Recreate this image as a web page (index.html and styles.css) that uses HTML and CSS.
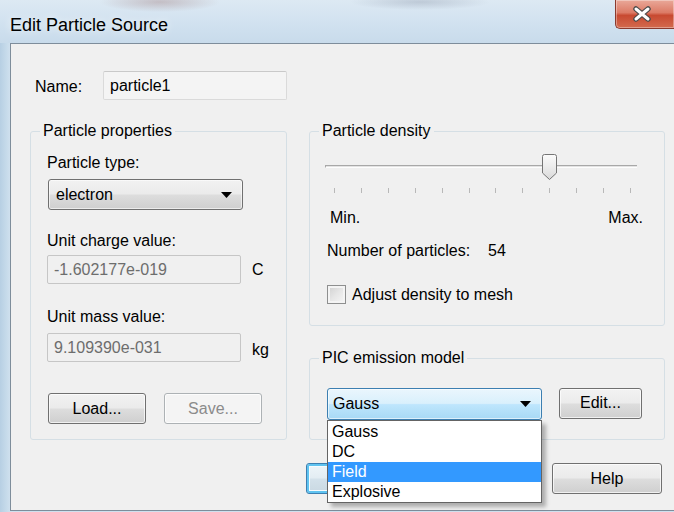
FILE: index.html
```html
<!DOCTYPE html>
<html lang="en">
<head>
<meta charset="utf-8">
<title>Edit Particle Source</title>
<link rel="stylesheet" href="styles.css">
</head>
<body>
<div class="window">
  <div class="titlebar">
    <span class="title">Edit Particle Source</span>
    <div class="close">
      <svg width="20" height="16" viewBox="0 0 20 16">
        <path d="M4 3 L16 13 M16 3 L4 13" stroke="#4b4b4b" stroke-width="5.5" stroke-linecap="round"/>
        <path d="M4 3 L16 13 M16 3 L4 13" stroke="#ffffff" stroke-width="3" stroke-linecap="round"/>
      </svg>
    </div>
  </div>

  <div class="client">
    <div class="name-row">
      <span class="name-label">Name:</span>
      <div class="field name-field">particle1</div>
    </div>

    <div class="columns">
      <fieldset class="group props">
        <legend>Particle properties</legend>
        <div class="props-body">
          <div class="lbl">Particle type:</div>
          <div class="select">
            <span>electron</span>
            <svg class="arrow" width="11" height="6" viewBox="0 0 11 6"><path d="M0 0 H11 L5.5 6 Z" fill="#000"/></svg>
          </div>

          <div class="lbl charge-lbl">Unit charge value:</div>
          <div class="unit-row charge-row">
            <div class="field disabled">-1.602177e-019</div>
            <span class="unit">C</span>
          </div>

          <div class="lbl mass-lbl">Unit mass value:</div>
          <div class="unit-row mass-row">
            <div class="field disabled">9.109390e-031</div>
            <span class="unit">kg</span>
          </div>

          <div class="btn-row">
            <button class="btn">Load...</button>
            <button class="btn" disabled>Save...</button>
          </div>
        </div>
      </fieldset>

      <div class="right-col">
        <fieldset class="group density">
          <legend>Particle density</legend>
          <div class="density-body">
            <div class="slider">
              <div class="track"></div>
              <svg class="thumb" width="17" height="28" viewBox="0 0 17 28">
                <defs>
                  <linearGradient id="thumbFill" x1="0" y1="0" x2="0" y2="1">
                    <stop offset="0" stop-color="#fbfbfb"/>
                    <stop offset="0.5" stop-color="#ececec"/>
                    <stop offset="1" stop-color="#d8d8d8"/>
                  </linearGradient>
                </defs>
                <path d="M1.5 3.5 Q1.5 1.5 3.5 1.5 H13.5 Q15.5 1.5 15.5 3.5 V20 L8.5 26.5 L1.5 20 Z" fill="url(#thumbFill)" stroke="#757575" stroke-width="1"/>
              </svg>
            </div>
            <div class="ticks">
              <i></i><i></i><i></i><i></i><i></i><i></i><i></i><i></i><i></i><i></i><i></i><i></i>
            </div>
            <div class="minmax"><span>Min.</span><span>Max.</span></div>
            <div class="count"><span class="count-label">Number of particles:</span><span>54</span></div>
            <div class="check-row">
              <span class="checkbox"></span>
              <span>Adjust density to mesh</span>
            </div>
          </div>
        </fieldset>

        <fieldset class="group pic">
          <legend>PIC emission model</legend>
          <div class="pic-body">
            <div class="combo-wrap">
              <div class="combo">
                <span>Gauss</span>
                <svg class="arrow" width="11" height="6" viewBox="0 0 11 6"><path d="M0 0 H11 L5.5 6 Z" fill="#000"/></svg>
              </div>
              <ul class="dropdown">
                <li>Gauss</li>
                <li>DC</li>
                <li class="selected">Field</li>
                <li>Explosive</li>
              </ul>
            </div>
            <button class="btn edit-btn">Edit...</button>
          </div>
        </fieldset>
      </div>
    </div>

    <!-- OK and Cancel sit beneath the open drop-down list -->
    <div class="footer">
      <button class="btn wide default" aria-label="OK"></button>
      <button class="btn wide" aria-label="Cancel"></button>
      <button class="btn wide">Help</button>
    </div>
  </div>
</div>
</body>
</html>
```

FILE: styles.css
```css
* {
  box-sizing: border-box;
}

html, body {
  margin: 0;
  padding: 0;
}

body {
  width: 674px;
  height: 512px;
  overflow: hidden;
  font-family: "Liberation Sans", Arial, sans-serif;
  font-size: 16px;
  color: #000;
  background: #c9dcec;
}

.window {
  width: 674px;
  height: 512px;
  display: flex;
  flex-direction: column;
  background: linear-gradient(90deg, #b7cfe3 0, #c5daea 6px, #cfe0ee 10px);
}

/* ---------- title bar ---------- */
.titlebar {
  height: 43px;
  flex: none;
  display: flex;
  justify-content: space-between;
  align-items: flex-start;
  background:
    radial-gradient(ellipse 60px 10px at 160px 2px, rgba(150, 110, 110, 0.35), transparent),
    radial-gradient(ellipse 70px 8px at 420px 2px, rgba(120, 130, 150, 0.3), transparent),
    linear-gradient(180deg, #dde9f3 0, #d2e2f0 50%, #c8dbeb 100%);
}

.title {
  padding: 15px 0 0 10px;
  font-size: 18px;
  line-height: 20px;
  color: #000;
  text-shadow: 0 0 8px rgba(255, 255, 255, 0.9);
}

.close {
  width: 59px;
  height: 29px;
  margin-left: auto;
  display: flex;
  align-items: center;
  justify-content: center;
  padding-right: 7px;
  border: 1px solid #8a3a2e;
  border-top: none;
  border-right: none;
  border-radius: 0 0 0 5px;
  background: linear-gradient(180deg, #e9a899 0, #dc7b66 45%, #c84a31 55%, #d36a4e 100%);
  box-shadow: inset 0 0 0 1px rgba(255, 255, 255, 0.35);
}

/* ---------- client area ---------- */
.client {
  height: 468px;
  margin-left: 10px;
  padding: 27px 9px 0 19px;
  background: #f0f0f0;
  border: 1px solid #7e8d9b;
  border-right: none;
}

.name-row {
  display: flex;
  align-items: center;
  height: 29px;
}

.name-label {
  width: 73px;
  padding: 3px 0 0 5px;
}

.field {
  height: 29px;
  display: flex;
  align-items: center;
  padding-left: 6px;
  border: 1px solid #dadada;
  border-top-color: #c9c9c9;
  border-radius: 2px;
  background: #f3f3f3;
}

.name-field {
  width: 184px;
  background: #f4f4f4;
}

.field.disabled {
  width: 194px;
  color: #6d6d6d;
  border-color: #c6c6c6;
  background: #f0f0f0;
}

.columns {
  display: flex;
  gap: 22px;
  margin-top: 22px;
}

.group {
  margin: 0;
  padding: 0;
  border: 1px solid #d5dfe5;
  border-radius: 3px;
  min-width: 0;
}

.group legend {
  margin-left: 9px;
  padding: 0 3px;
  line-height: 18px;
}

.lbl {
  line-height: 18px;
}

/* ---------- left group ---------- */
.props {
  width: 257px;
}

.props-body {
  padding: 14px 0 15px 16px;
}

.select {
  width: 195px;
  height: 31px;
  margin: 7px 0 0 1px;
  padding: 0 10px 0 7px;
  display: flex;
  align-items: center;
  justify-content: space-between;
  border: 1px solid #707070;
  border-radius: 3px;
  background: linear-gradient(180deg, #f2f2f2 0, #ebebeb 48%, #dddddd 52%, #cfcfcf 100%);
  box-shadow: inset 0 0 0 1px rgba(255, 255, 255, 0.6);
}

.charge-lbl {
  margin-top: 22px;
}

.mass-lbl {
  margin-top: 24px;
}

.unit-row {
  display: flex;
  align-items: center;
  gap: 11px;
}

.charge-row {
  margin-top: 5px;
}

.mass-row {
  margin-top: 7px;
}

.mass-row .unit {
  padding-top: 4px;
}

.btn-row {
  display: flex;
  gap: 18px;
  margin: 31px 0 0 1px;
}

.btn {
  font: inherit;
  color: #000;
  height: 31px;
  width: 98px;
  padding: 0;
  border: 1px solid #707070;
  border-radius: 3px;
  background: linear-gradient(180deg, #f2f2f2 0, #ebebeb 48%, #dddddd 52%, #cfcfcf 100%);
  box-shadow: inset 0 0 0 1px rgba(255, 255, 255, 0.7);
}

.btn:disabled {
  color: #8b8b8b;
  border-color: #adb2b5;
  background: #f4f4f4;
}

/* ---------- right column ---------- */
.right-col {
  width: 356px;
  display: flex;
  flex-direction: column;
  gap: 23px;
}

.density-body {
  padding: 13px 0 21px 15px;
}

.slider {
  position: relative;
  width: 312px;
  height: 28px;
}

.track {
  position: absolute;
  left: 0;
  right: 0;
  top: 12px;
  height: 3px;
  border-top: 1px solid #a8a8a8;
  border-left: 1px solid #a8a8a8;
  border-bottom: 1px solid #fdfdfd;
  background: #e3e3e3;
}

.thumb {
  position: absolute;
  left: 216px;
  top: 0;
}

.ticks {
  display: flex;
  justify-content: space-between;
  width: 297px;
  height: 5px;
  margin: 7px 0 0 9px;
}

.ticks i {
  width: 1px;
  height: 5px;
  background: #b8b8b8;
}

.minmax {
  display: flex;
  justify-content: space-between;
  width: 318px;
  margin-top: 16px;
  padding-left: 5px;
  line-height: 18px;
}

.count {
  margin: 15px 0 0 2px;
  line-height: 18px;
  display: flex;
}

.count-label {
  width: 161px;
}

.check-row {
  display: flex;
  align-items: center;
  gap: 6px;
  margin: 25px 0 0 2px;
  height: 19px;
}

.checkbox {
  width: 19px;
  height: 19px;
  border: 1px solid #8e8f8f;
  background: linear-gradient(135deg, #cfcfcf 0, #e6e6e6 50%, #f6f6f6 100%);
  box-shadow: inset 0 0 0 2px #f4f4f4;
}

.pic-body {
  display: flex;
  align-items: center;
  gap: 17px;
  padding: 21px 0 19px 17px;
}

.combo-wrap {
  position: relative;
}

.combo {
  width: 215px;
  height: 32px;
  padding: 0 10px 0 5px;
  display: flex;
  align-items: center;
  justify-content: space-between;
  border: 1px solid #3c7fb1;
  border-radius: 3px;
  background: linear-gradient(180deg, #eaf6fd 0, #d9f0fc 48%, #bee6fd 52%, #a7d9f5 100%);
  box-shadow: inset 0 0 0 1px rgba(255, 255, 255, 0.6);
}

.dropdown {
  position: absolute;
  top: 32px;
  left: 0;
  z-index: 2;
  width: 215px;
  margin: 0;
  padding: 1px 0 0;
  list-style: none;
  background: #fff;
  border: 1px solid #646464;
  box-shadow: 4px 4px 4px rgba(0, 0, 0, 0.28);
}

.dropdown li {
  height: 20px;
  line-height: 20px;
  padding-left: 4px;
}

.dropdown li.selected {
  background: #3399ff;
  color: #fff;
}

.edit-btn {
  width: 83px;
  margin-top: -2px;
}

/* ---------- footer ---------- */
.footer {
  display: flex;
  justify-content: flex-end;
  gap: 13px;
  margin-top: 23px;
  padding-right: 3px;
}

.btn.wide {
  width: 110px;
}

.btn.default {
  border-color: #3c7fb1;
  box-shadow: inset 0 0 0 2px #5fc3f0, inset 0 0 0 3px #f6fbfd;
  background: linear-gradient(180deg, #eef5f9 0, #e3edf3 48%, #d3e1ea 52%, #c9d8e2 100%);
}
```
